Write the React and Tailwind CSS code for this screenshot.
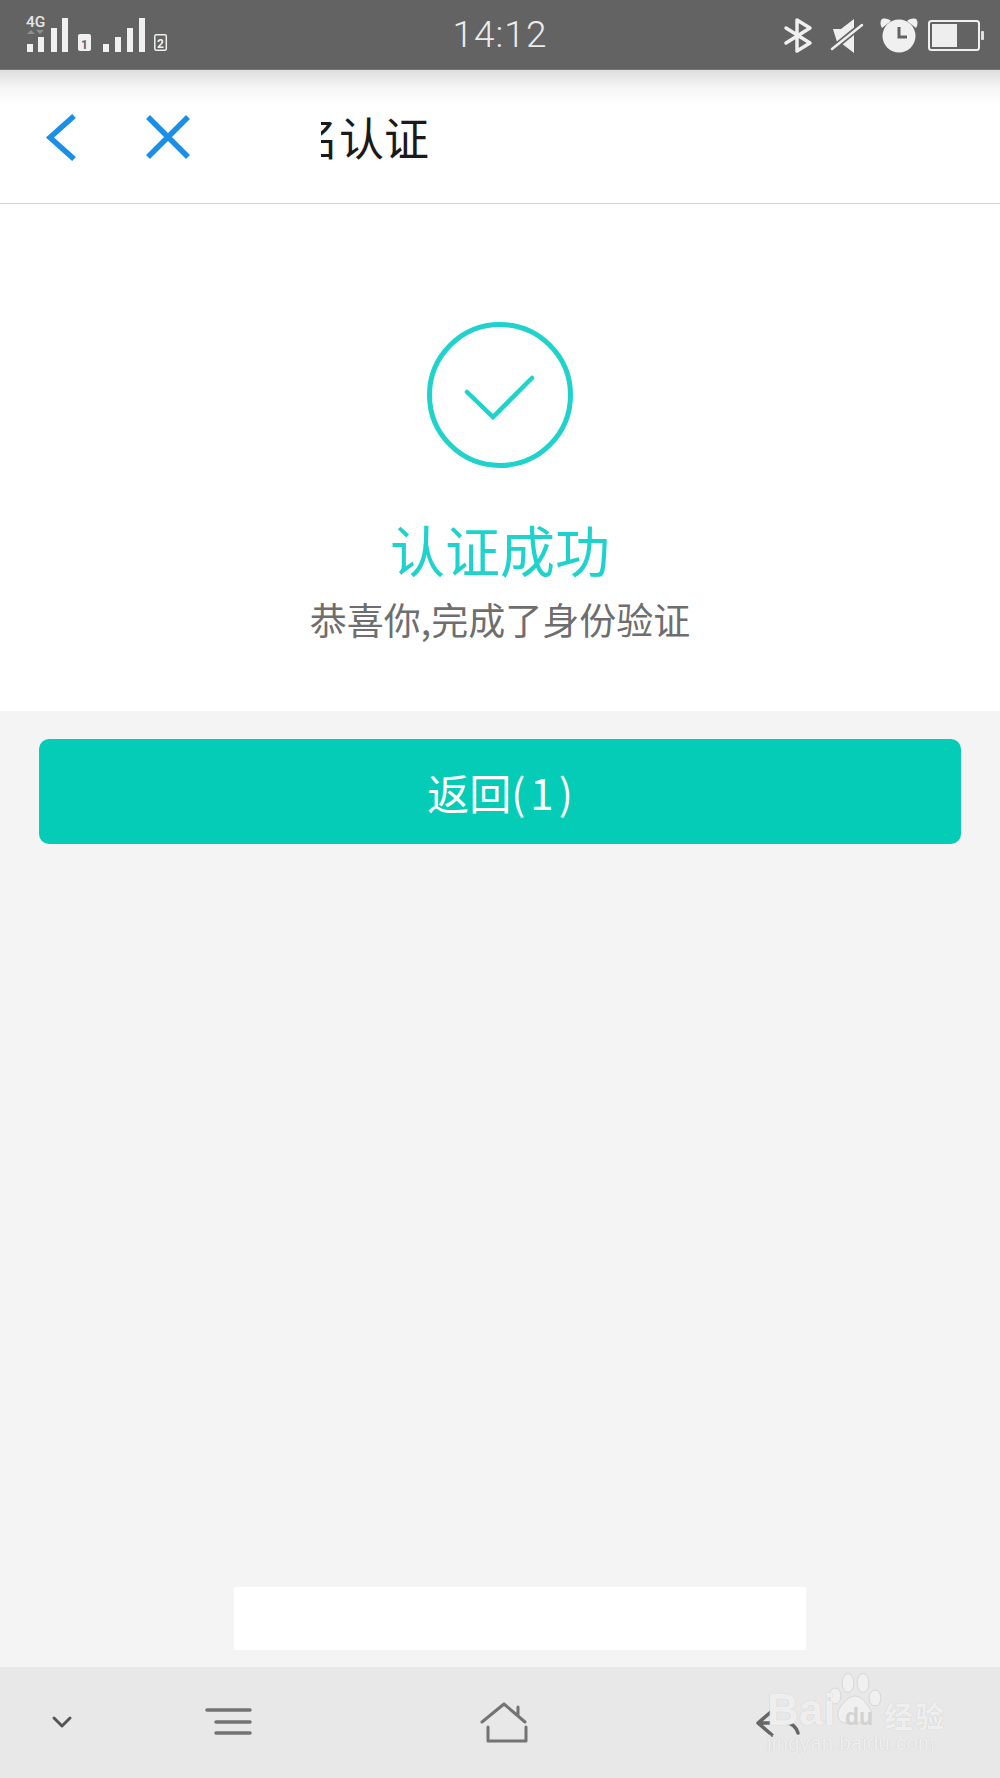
import React from 'react';

const cjk = 'font-["Noto_Sans_CJK_SC","Noto_Sans",sans-serif]';

function SignalIcons() {
  return (
    <svg width="170" height="48" viewBox="20 10 170 48" className="block">
      <text x="26" y="26" fontFamily="Roboto, sans-serif" fontSize="15.5" fontWeight="500" fill="#e6e6e6">4G</text>
      <path d="M27 33l4-4 4 4zM36 29h8l-4 4z" fill="#8f8f8f" />
      <g fill="#f0f0f0">
        <rect x="27" y="43" width="6" height="8" />
        <rect x="38" y="36" width="6" height="15" />
        <rect x="51" y="27" width="6" height="24" />
        <rect x="62" y="17" width="6" height="34" />
        <rect x="78" y="33" width="13" height="17" rx="2" />
        <rect x="103" y="43" width="6" height="8" />
        <rect x="115" y="36" width="6" height="15" />
        <rect x="127" y="27" width="6" height="24" />
        <rect x="139" y="17" width="6" height="34" />
      </g>
      <text x="84.5" y="47.5" textAnchor="middle" fontFamily="Roboto, sans-serif" fontSize="12" fontWeight="700" fill="#636363">1</text>
      <rect x="154.8" y="33.8" width="11.5" height="15.5" rx="1.5" fill="none" stroke="#f0f0f0" strokeWidth="1.5" />
      <text x="160.5" y="47" textAnchor="middle" fontFamily="Roboto, sans-serif" fontSize="12" fontWeight="700" fill="#f0f0f0">2</text>
    </svg>
  );
}

function RightIcons() {
  return (
    <svg width="210" height="48" viewBox="780 10 210 48" className="block">
      {/* bluetooth */}
      <path d="M786 27l24 15-13 8V19l13 8-24 15" fill="none" stroke="#f0f0f0" strokeWidth="3.5" strokeLinejoin="round" strokeLinecap="round" />
      {/* muted speaker */}
      <path d="M833 28h8l13-10v34l-13-10-4-1z" fill="#efefef" />
      <path d="M831 49l32-26" stroke="#636363" strokeWidth="6" />
      <path d="M832 48l30-24" stroke="#efefef" strokeWidth="2.5" strokeLinecap="round" />
      {/* alarm */}
      <circle cx="899" cy="35" r="16.5" fill="#f0f0f0" />
      <path d="M882 27c-2-3-2-7 0-9 3-1 7 0 9 2zM916 27c2-3 2-7 0-9-3-1-7 0-9 2z" fill="#f0f0f0" />
      <path d="M899 26v10h8" fill="none" stroke="#636363" strokeWidth="3" />
      {/* battery */}
      <rect x="929" y="20" width="50" height="29" rx="2.5" fill="none" stroke="#f0f0f0" strokeWidth="2" />
      <rect x="932" y="23" width="25" height="23" fill="#eeeeee" />
      <rect x="981" y="30" width="3" height="9" rx="1" fill="#e0e0e0" />
    </svg>
  );
}

function Watermark() {
  return (
    <div className="absolute left-[767px] top-[1672px] w-[180px] h-[84px] text-white/75 [text-shadow:0_0_1px_#bdbdbd]">
      <svg width="60" height="60" viewBox="0 0 60 60" className="absolute left-[60px] top-0">
        <g fill="#f0f0f0" stroke="#d6d6d6" strokeWidth="1">
          <ellipse cx="8" cy="24" rx="6" ry="8" />
          <ellipse cx="21" cy="11" rx="6" ry="9.5" />
          <ellipse cx="36" cy="11" rx="6" ry="9.5" />
          <ellipse cx="48" cy="26" rx="6" ry="8" />
          <path d="M28 24c6 0 9 5 13 10 5 5 5 17-6 17-3 0-5-1-7-1s-5 1-8 1c-11 0-11-12-6-17 4-5 8-10 14-10z" />
        </g>
      </svg>
      <span className={`absolute left-0 top-[12px] font-["Liberation_Sans",sans-serif] font-bold text-[44px] leading-[52px]`}>Bai</span>
      <span className={`absolute left-[78px] top-[31px] font-["Liberation_Sans",sans-serif] font-bold text-[23px] leading-[28px] text-[#d2d2d2] [text-shadow:none]`}>du</span>
      <span className={`absolute left-[117px] top-[24px] ${cjk} font-bold text-[29px] leading-[38px] tracking-[2px] whitespace-nowrap`}>经验</span>
      <span className={`absolute left-0 top-[59px] font-["Liberation_Sans",sans-serif] text-[20px] leading-[24px] tracking-[0.4px] whitespace-nowrap`}>jingyan.baidu.com</span>
    </div>
  );
}

export default function App() {
  return (
    <div className={`relative flex flex-col h-[1778px] w-[1000px] overflow-hidden bg-[#f4f4f4] ${cjk}`}>
      {/* status bar */}
      <div className="grid grid-cols-3 items-center h-[70px] shrink-0 bg-[#636363] border-b border-[#777777]">
        <div className="pl-[20px]">
          <SignalIcons />
        </div>
        <div className="text-center font-['Roboto',sans-serif] font-light text-[37px] leading-[70px] tracking-[1px] text-[#ececec]">14:12</div>
        <div className="flex justify-end pr-[10px]">
          <RightIcons />
        </div>
      </div>

      {/* header */}
      <div className="flex items-center h-[134px] shrink-0 border-b border-[#d4d4d4] bg-[linear-gradient(#dedede,#f6f6f6_18px,#ffffff_36px)]">
        <svg width="32" height="48" viewBox="0 0 32 48" className="ml-[45px]">
          <path d="M29 3L5 24.5 29 46" fill="none" stroke="#1b8fe8" strokeWidth="5.5" />
        </svg>
        <svg width="46" height="46" viewBox="0 0 46 46" className="ml-[68px]">
          <path d="M3 3l40 40M43 3L3 43" fill="none" stroke="#1b8fe8" strokeWidth="5.5" />
        </svg>
        <div className="ml-[130px] flex justify-end w-[108px] overflow-hidden text-[45px] leading-[60px] text-[#1a1a1a] whitespace-nowrap">
          实名认证
        </div>
      </div>

      {/* result */}
      <div className="flex flex-col items-center h-[507px] shrink-0 bg-white pt-[118px]">
        <svg width="146" height="146" viewBox="0 0 146 146">
          <circle cx="73" cy="73" r="70.5" fill="none" stroke="#1fd3cc" strokeWidth="5" />
          <path d="M40 70l26 25 39-39" fill="none" stroke="#1fd3cc" strokeWidth="4.5" strokeLinecap="round" strokeLinejoin="miter" />
        </svg>
        <div className="mt-[40px] text-[55px] leading-[80px] text-[#1fd3cc]">认证成功</div>
        <div className="mt-[3px] text-[37px] leading-[56px] text-[#6e6e6e]">恭喜你,完成了身份验证</div>
      </div>

      {/* grey area */}
      <div className="flex flex-col flex-1 pt-[28px] pb-[17px]">
        <button className="mx-[39px] h-[105px] rounded-[10px] bg-[#04ccb6] text-white text-[42px] leading-[105px] font-normal">
          返回(<span className="px-[5px]">1</span>)
        </button>
        <div className="mt-auto ml-[234px] w-[572px] h-[63px] bg-white"></div>
      </div>

      {/* nav bar */}
      <div className="relative h-[111px] shrink-0 bg-[#e8e8e8]">
        <svg width="1000" height="111" viewBox="0 1667 1000 111" className="block" fill="none" strokeLinecap="round" strokeLinejoin="round">
          <path d="M54 1718l8 8 8-8" stroke="#555555" strokeWidth="3" />
          <path d="M207 1710h43M216 1722h34M216 1733h34" stroke="#737373" strokeWidth="3.5" />
          <path d="M482 1722l22-18 21 18M518 1707v9M488 1727v14h38M526 1727v14" stroke="#737373" strokeWidth="3" />
          <path d="M772 1711l-14 12 14 12M758 1723h28c6 0 10 4 12 10" stroke="#666666" strokeWidth="3.5" />
        </svg>
      </div>
      <Watermark />
    </div>
  );
}
